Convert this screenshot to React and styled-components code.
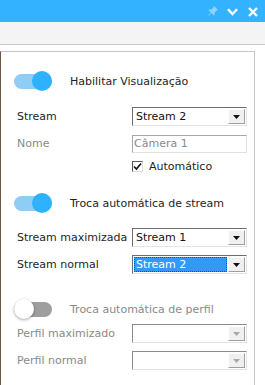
import React from "react";
import styled, { createGlobalStyle, css } from "styled-components";

const GlobalStyle = createGlobalStyle`
  html, body {
    margin: 0;
    padding: 0;
    background: #ffffff;
  }
  body {
    font-family: "DejaVu Sans", Verdana, sans-serif;
    font-size: 11px;
    color: #1e1e1e;
  }
`;

function App() {
  return (
    <Window>
      <GlobalStyle />
      <TitleBar>
        <TitleIcon $faded>
          <svg width="10" height="10" viewBox="0 0 10 10">
            <path d="M6 0 L10 4 L8.6 4.6 L6.6 6.6 L6.8 8.6 L6 9.4 L3.6 7 L1 9.6 L0.4 9 L3 6.4 L0.6 4 L1.4 3.2 L3.4 3.4 L5.4 1.4 Z" fill="#8fd3ff" />
          </svg>
        </TitleIcon>
        <TitleIcon>
          <svg width="11" height="8" viewBox="0 0 11 8">
            <path d="M1 1.2 L5.5 6 L10 1.2" fill="none" stroke="#fff" strokeWidth="2.4" />
          </svg>
        </TitleIcon>
        <TitleIcon>
          <svg width="10" height="10" viewBox="0 0 10 10">
            <path d="M1 1 L9 9 M9 1 L1 9" fill="none" stroke="#fff" strokeWidth="2.4" />
          </svg>
        </TitleIcon>
      </TitleBar>
      <Toolbar />
      <Body>
        <Panel>
          <Switch on label="Habilitar Visualização" gap={12} />
          <Row>
            <Label>Stream</Label>
            <Select value="Stream 2" />
          </Row>
          <Row>
            <Label $muted>Nome</Label>
            <TextBox>Câmera 1</TextBox>
          </Row>
          <CheckRow>
            <CheckBox>
              <svg width="9" height="9" viewBox="0 0 9 9">
                <path d="M1 4.5 L3.4 7 L8 1.6" fill="none" stroke="#111" strokeWidth="1.6" />
              </svg>
            </CheckBox>
            <span>Automático</span>
          </CheckRow>

          <Switch on label="Troca automática de stream" top={18} gap={11} />
          <Row>
            <Label>Stream maximizada</Label>
            <Select value="Stream 1" />
          </Row>
          <Row>
            <Label>Stream normal</Label>
            <Select value="Stream 2" focused />
          </Row>

          <Switch label="Troca automática de perfil" top={21} gap={1} />
          <Row>
            <Label $muted>Perfil maximizado</Label>
            <Select disabled />
          </Row>
          <Row>
            <Label $muted>Perfil normal</Label>
            <Select disabled />
          </Row>
        </Panel>
      </Body>
    </Window>
  );
}

function Switch({ on, label, top = 0, gap = 0 }) {
  return (
    <SwitchRow style={{ marginTop: top, marginBottom: gap }}>
      <Track $on={on}>
        <Knob $on={on} />
      </Track>
      <SwitchLabel $on={on}>{label}</SwitchLabel>
    </SwitchRow>
  );
}

function Select({ value, focused, disabled }) {
  return (
    <SelectBox $disabled={disabled}>
      <SelectValue $focused={focused}>{value}</SelectValue>
      <ArrowButton>
        <svg width="7" height="4" viewBox="0 0 7 4">
          <path d="M0 0 L7 0 L3.5 4 Z" fill={disabled ? "#a8a8a8" : "#111"} />
        </svg>
      </ArrowButton>
    </SelectBox>
  );
}

export default App;

const Window = styled.div`
  width: 265px;
  height: 385px;
  overflow: hidden;
  background: #ffffff;
`;

const TitleBar = styled.div`
  height: 22px;
  background: #33b3ff;
  display: flex;
  align-items: center;
  justify-content: flex-end;
  gap: 9px;
  padding-right: 7px;
`;

const TitleIcon = styled.span`
  display: flex;
  align-items: center;
  justify-content: center;
  width: 11px;
  height: 12px;
  margin-top: ${(p) => (p.$faded ? "0" : "1px")};
`;

const Toolbar = styled.div`
  height: 22px;
  background: #f4f4f4;
  border-bottom: 1px solid #c8c8c8;
`;

const Body = styled.div`
  padding-top: 6px;
`;

const Panel = styled.div`
  width: 255px;
  height: 340px;
  border-top: 1px solid #c4c4c4;
  border-right: 1px solid #c4c4c4;
  border-left: 1px solid #6b5a48;
  padding: 19px 0 0 13px;
  box-sizing: border-box;
  display: flex;
  flex-direction: column;
`;

const SwitchRow = styled.div`
  height: 20px;
  display: flex;
  align-items: center;
`;

const Track = styled.div`
  position: relative;
  width: 38px;
  height: 15px;
  border-radius: 8px;
  background: ${(p) => (p.$on ? "#8fcdf4" : "#9e9e9e")};
`;

const Knob = styled.div`
  position: absolute;
  top: -3px;
  width: 20px;
  height: 20px;
  border-radius: 50%;
  ${(p) =>
    p.$on
      ? css`
          right: 0;
          background: #2eb1ff;
        `
      : css`
          left: 0;
          background: #ffffff;
          box-shadow: 0 1px 3px rgba(0, 0, 0, 0.35);
        `}
`;

const SwitchLabel = styled.span`
  margin-left: 18px;
  font-size: 11px;
  color: ${(p) => (p.$on ? "#1e1e1e" : "#8a8a8a")};
`;

const Row = styled.div`
  height: 27px;
  display: flex;
  align-items: center;
`;

const Label = styled.span`
  width: 115px;
  padding-left: 3px;
  white-space: nowrap;
  color: ${(p) => (p.$muted ? "#8a8a8a" : "#1e1e1e")};
`;

const SelectBox = styled.div`
  width: 115px;
  height: 19px;
  box-sizing: border-box;
  display: flex;
  align-items: stretch;
  padding: 1px;
  background: #ffffff;
  border-top: 1px solid ${(p) => (p.$disabled ? "#8c8c8c" : "#6e6e6e")};
  border-left: 1px solid ${(p) => (p.$disabled ? "#8c8c8c" : "#6e6e6e")};
  border-right: 1px solid #e4e4e4;
  border-bottom: 1px solid #e4e4e4;
`;

const SelectValue = styled.div`
  flex: 1;
  display: flex;
  align-items: center;
  padding-left: 2px;
  font-size: 11px;
  ${(p) =>
    p.$focused
      ? css`
          background: #3399ff;
          color: #ffffff;
          outline: 1px dotted #5a4a10;
          outline-offset: -1px;
        `
      : css`
          color: #111111;
        `}
`;

const ArrowButton = styled.div`
  width: 15px;
  margin-left: 1px;
  display: flex;
  align-items: center;
  justify-content: center;
  background: #f0f0f0;
  border-top: 1px solid #ffffff;
  border-left: 1px solid #ffffff;
  border-right: 1px solid #a0a0a0;
  border-bottom: 1px solid #a0a0a0;
`;

const TextBox = styled.div`
  width: 115px;
  height: 18px;
  box-sizing: border-box;
  display: flex;
  align-items: center;
  padding-left: 1px;
  color: #8a8a8a;
  border-top: 1px solid #a8a8a8;
  border-left: 1px solid #a8a8a8;
  border-right: 1px solid #e0e0e0;
  border-bottom: 1px solid #e0e0e0;
`;

const CheckRow = styled.div`
  height: 18px;
  display: flex;
  align-items: center;
  gap: 6px;
  padding-left: 118px;
`;

const CheckBox = styled.span`
  width: 11px;
  height: 11px;
  box-sizing: border-box;
  border-top: 1px solid #555;
  border-left: 1px solid #555;
  border-right: 1px solid #ddd;
  border-bottom: 1px solid #ddd;
  background: #fff;
  display: flex;
  align-items: center;
  justify-content: center;
`;
